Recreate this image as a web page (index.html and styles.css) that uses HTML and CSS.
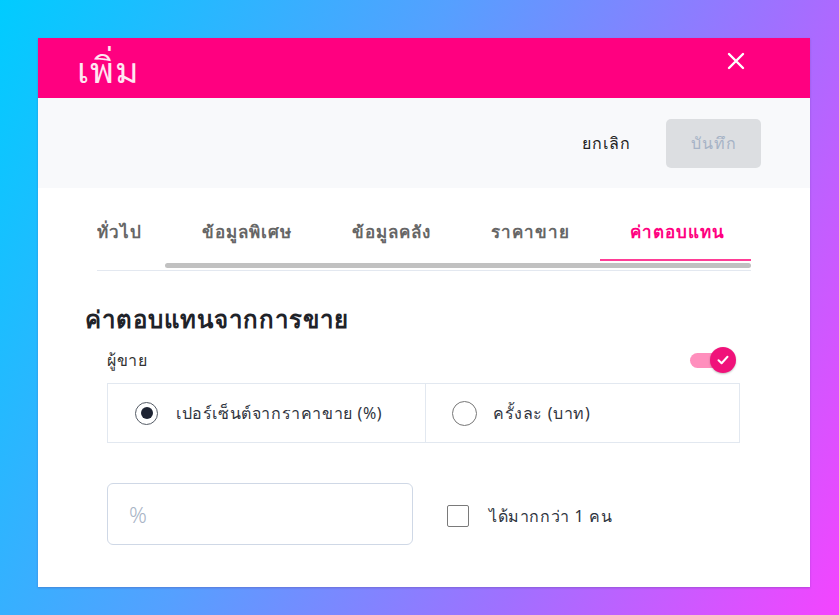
FILE: index.html
```html
<!DOCTYPE html>
<html lang="th">
<head>
    <meta charset="UTF-8">
    <meta name="viewport" content="width=device-width, initial-scale=1.0">
    <title>เพิ่ม</title>
    <link rel="stylesheet" href="styles.css">
</head>
<body>
    <div class="modal">
        <div class="modal-head">
            <div class="modal-title">เพิ่ม</div>
            <div class="close">
                <svg width="20" height="20" viewBox="0 0 20 20"><path d="M3 3L17 17M17 3L3 17" stroke="#ffffff" stroke-width="2.4" stroke-linecap="round"/></svg>
            </div>
        </div>
        <div class="actions">
            <button class="btn-cancel">ยกเลิก</button>
            <button class="btn-save">บันทึก</button>
        </div>
        <div class="content">
            <div class="tabs-wrap">
                <div class="tabs">
                    <div class="tab">ทั่วไป</div>
                    <div class="tab">ข้อมูลพิเศษ</div>
                    <div class="tab">ข้อมูลคลัง</div>
                    <div class="tab">ราคาขาย</div>
                    <div class="tab active">ค่าตอบแทน</div>
                </div>
                <div class="scroll-track"><div class="scroll-thumb"></div></div>
            </div>

            <h2 class="section-title">ค่าตอบแทนจากการขาย</h2>

            <div class="field">
                <div class="field-row">
                    <span class="field-label">ผู้ขาย</span>
                    <div class="toggle">
                        <div class="toggle-track"></div>
                        <div class="toggle-knob">
                            <svg width="14" height="14" viewBox="0 0 14 14"><path d="M2.5 7.2L5.6 10.2L11.5 3.8" fill="none" stroke="#ffffff" stroke-width="2" stroke-linecap="round" stroke-linejoin="round"/></svg>
                        </div>
                    </div>
                </div>
                <div class="radio-group">
                    <label class="radio-item">
                        <span class="radio checked"></span>
                        <span>เปอร์เซ็นต์จากราคาขาย (%)</span>
                    </label>
                    <label class="radio-item">
                        <span class="radio"></span>
                        <span>ครั้งละ (บาท)</span>
                    </label>
                </div>
                <div class="input-row">
                    <div class="input-box">
                        <span class="input-prefix">%</span>
                    </div>
                    <label class="check-item">
                        <span class="checkbox"></span>
                        <span>ได้มากกว่า 1 คน</span>
                    </label>
                </div>
            </div>
        </div>
    </div>
</body>
</html>
```

FILE: styles.css
```css
body{
    margin: 0;
    height: 615px;
    padding: 38px 29px 28px 38px;
    box-sizing: border-box;
    background: linear-gradient(115deg, #00ccff 0%, #55a0ff 40%, #a070ff 70%, #f444ff 100%);
    font-family: "Noto Sans", "DejaVu Sans", sans-serif;
    overflow: hidden;
}

.modal{
    width: 772px;
    height: 549px;
    background: #ffffff;
    box-shadow: 0 1px 2px rgba(80, 60, 140, 0.35);
    display: flex;
    flex-direction: column;
}

.modal-head{
    height: 60px;
    background: #ff0080;
    display: flex;
    align-items: center;
    justify-content: space-between;
    padding: 0 64px 0 39px;
}

.modal-title{
    font-family: "Norasi", "Kinnari", "Garuda", "Liberation Serif", serif;
    font-size: 36px;
    letter-spacing: 1px;
    color: #ffe6f2;
    line-height: 1;
    padding-top: 6px;
}

.close{
    display: flex;
    margin-top: -14px;
}

.actions{
    height: 90px;
    background: #f8f9fb;
    display: flex;
    align-items: center;
    justify-content: flex-end;
    padding-right: 49px;
    gap: 35px;
}

.actions button{
    font-family: inherit;
    font-size: 16px;
    letter-spacing: 1px;
    border: none;
    cursor: pointer;
}

.btn-cancel{
    background: transparent;
    color: #222222;
    padding: 0;
}

.btn-save{
    width: 95px;
    height: 49px;
    background: #dcdee1;
    color: #a6b3c6;
    border-radius: 5px;
}

.content{
    padding: 0 47px;
}

.tabs-wrap{
    margin: 0 12px;
    border-bottom: 1px solid #e3e8f0;
    overflow: hidden;
}

.tabs{
    display: flex;
    height: 73px;
    align-items: stretch;
}

.tab{
    padding: 16px 30px 0;
    font-size: 17px;
    letter-spacing: 1px;
    font-weight: bold;
    color: #666666;
    display: flex;
    align-items: center;
    border-bottom: 2px solid transparent;
    white-space: nowrap;
}

.tab:first-child{
    padding-left: 0;
}

.tab.active{
    color: #ff0080;
    border-bottom-color: #ff3d96;
}

.scroll-track{
    height: 9px;
    padding-top: 2px;
    box-sizing: border-box;
}

.scroll-thumb{
    margin-left: 68px;
    height: 5px;
    background: #c1c1c1;
    border-radius: 3px;
}

.section-title{
    margin: 33px 0 0;
    font-size: 24px;
    letter-spacing: 1px;
    font-weight: bold;
    color: #1f2329;
    line-height: 30px;
}

.field{
    padding: 0 23px 0 22px;
}

.field-row{
    display: flex;
    justify-content: space-between;
    align-items: center;
    margin-top: 11px;
    height: 30px;
}

.field-label{
    font-size: 16px;
    letter-spacing: 0.6px;
    color: #333333;
}

.toggle{
    position: relative;
    width: 46px;
    height: 26px;
    margin-right: 4px;
}

.toggle-track{
    position: absolute;
    left: 0;
    top: 6px;
    width: 34px;
    height: 15px;
    border-radius: 8px;
    background: #ff8fbd;
}

.toggle-knob{
    position: absolute;
    right: 0;
    top: 0;
    width: 26px;
    height: 26px;
    border-radius: 50%;
    background: #f0127a;
    display: flex;
    align-items: center;
    justify-content: center;
    box-shadow: 0 1px 2px rgba(0, 0, 0, 0.25);
}

.radio-group{
    margin-top: 8px;
    height: 58px;
    border: 1px solid #e2e8f0;
    display: grid;
    grid-template-columns: 317px 1fr;
}

.radio-item{
    display: flex;
    align-items: center;
    gap: 18px;
    padding-left: 27px;
    font-size: 16px;
    letter-spacing: 0.6px;
    color: #2f3440;
}

.radio-item + .radio-item{
    border-left: 1px solid #e2e8f0;
    padding-left: 26px;
    gap: 16px;
}

.radio{
    width: 23px;
    height: 23px;
    border: 1.5px solid #555c66;
    border-radius: 50%;
    box-sizing: border-box;
    display: flex;
    align-items: center;
    justify-content: center;
}

.radio.checked::after{
    content: "";
    width: 12px;
    height: 12px;
    border-radius: 50%;
    background: #1e2433;
}

.radio-item + .radio-item .radio{
    width: 25px;
    height: 25px;
    border-color: #777777;
}

.input-row{
    margin-top: 40px;
    display: flex;
    align-items: center;
    gap: 34px;
}

.input-box{
    width: 306px;
    height: 62px;
    border: 1px solid #cfd8e6;
    border-radius: 6px;
    box-sizing: border-box;
    display: flex;
    align-items: center;
    padding-left: 21px;
}

.input-prefix{
    font-size: 22px;
    color: #a9b4c6;
    font-weight: 300;
}

.check-item{
    display: flex;
    align-items: center;
    gap: 20px;
    font-size: 16px;
    letter-spacing: 0.6px;
    color: #2f3440;
    margin-top: 4px;
}

.checkbox{
    width: 22px;
    height: 22px;
    border: 1.5px solid #7a7a7a;
    border-radius: 2px;
    box-sizing: border-box;
}
```
